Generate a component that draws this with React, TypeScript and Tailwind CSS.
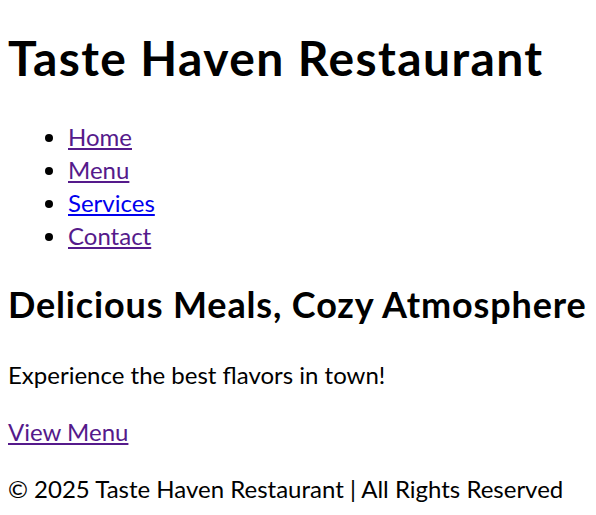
export default function App() {
  return (
    <div className="px-2 pt-[26px] font-['Lato',sans-serif] text-black bg-white min-h-[515px]">
      <header>
        <h1 className="text-[48px] leading-[64px] font-bold tracking-[1.4px]">Taste Haven Restaurant</h1>
        <nav className="mt-[30px]">
          <ul className="list-disc pl-[60px] text-[24px] leading-[33px]">
            <li><a href="#" className="underline text-[#551a8b]">Home</a></li>
            <li><a href="#" className="underline text-[#551a8b]">Menu</a></li>
            <li><a href="#" className="underline text-[#0000ee]">Services</a></li>
            <li><a href="#" className="underline text-[#551a8b]">Contact</a></li>
          </ul>
        </nav>
      </header>
      <section className="mt-[28px]">
        <h2 className="text-[36px] leading-[48px] font-bold tracking-[0.85px] whitespace-nowrap">
          Delicious Meals, Cozy Atmosphere
        </h2>
        <p className="mt-[30px] text-[24px] leading-[33px]">Experience the best flavors in town!</p>
        <p className="mt-[24px] text-[24px] leading-[33px]">
          <a href="#" className="underline text-[#551a8b]">View Menu</a>
        </p>
      </section>
      <footer className="mt-[24px] text-[24px] leading-[33px]">
        <p>© 2025 Taste Haven Restaurant | All Rights Reserved</p>
      </footer>
    </div>
  );
}
